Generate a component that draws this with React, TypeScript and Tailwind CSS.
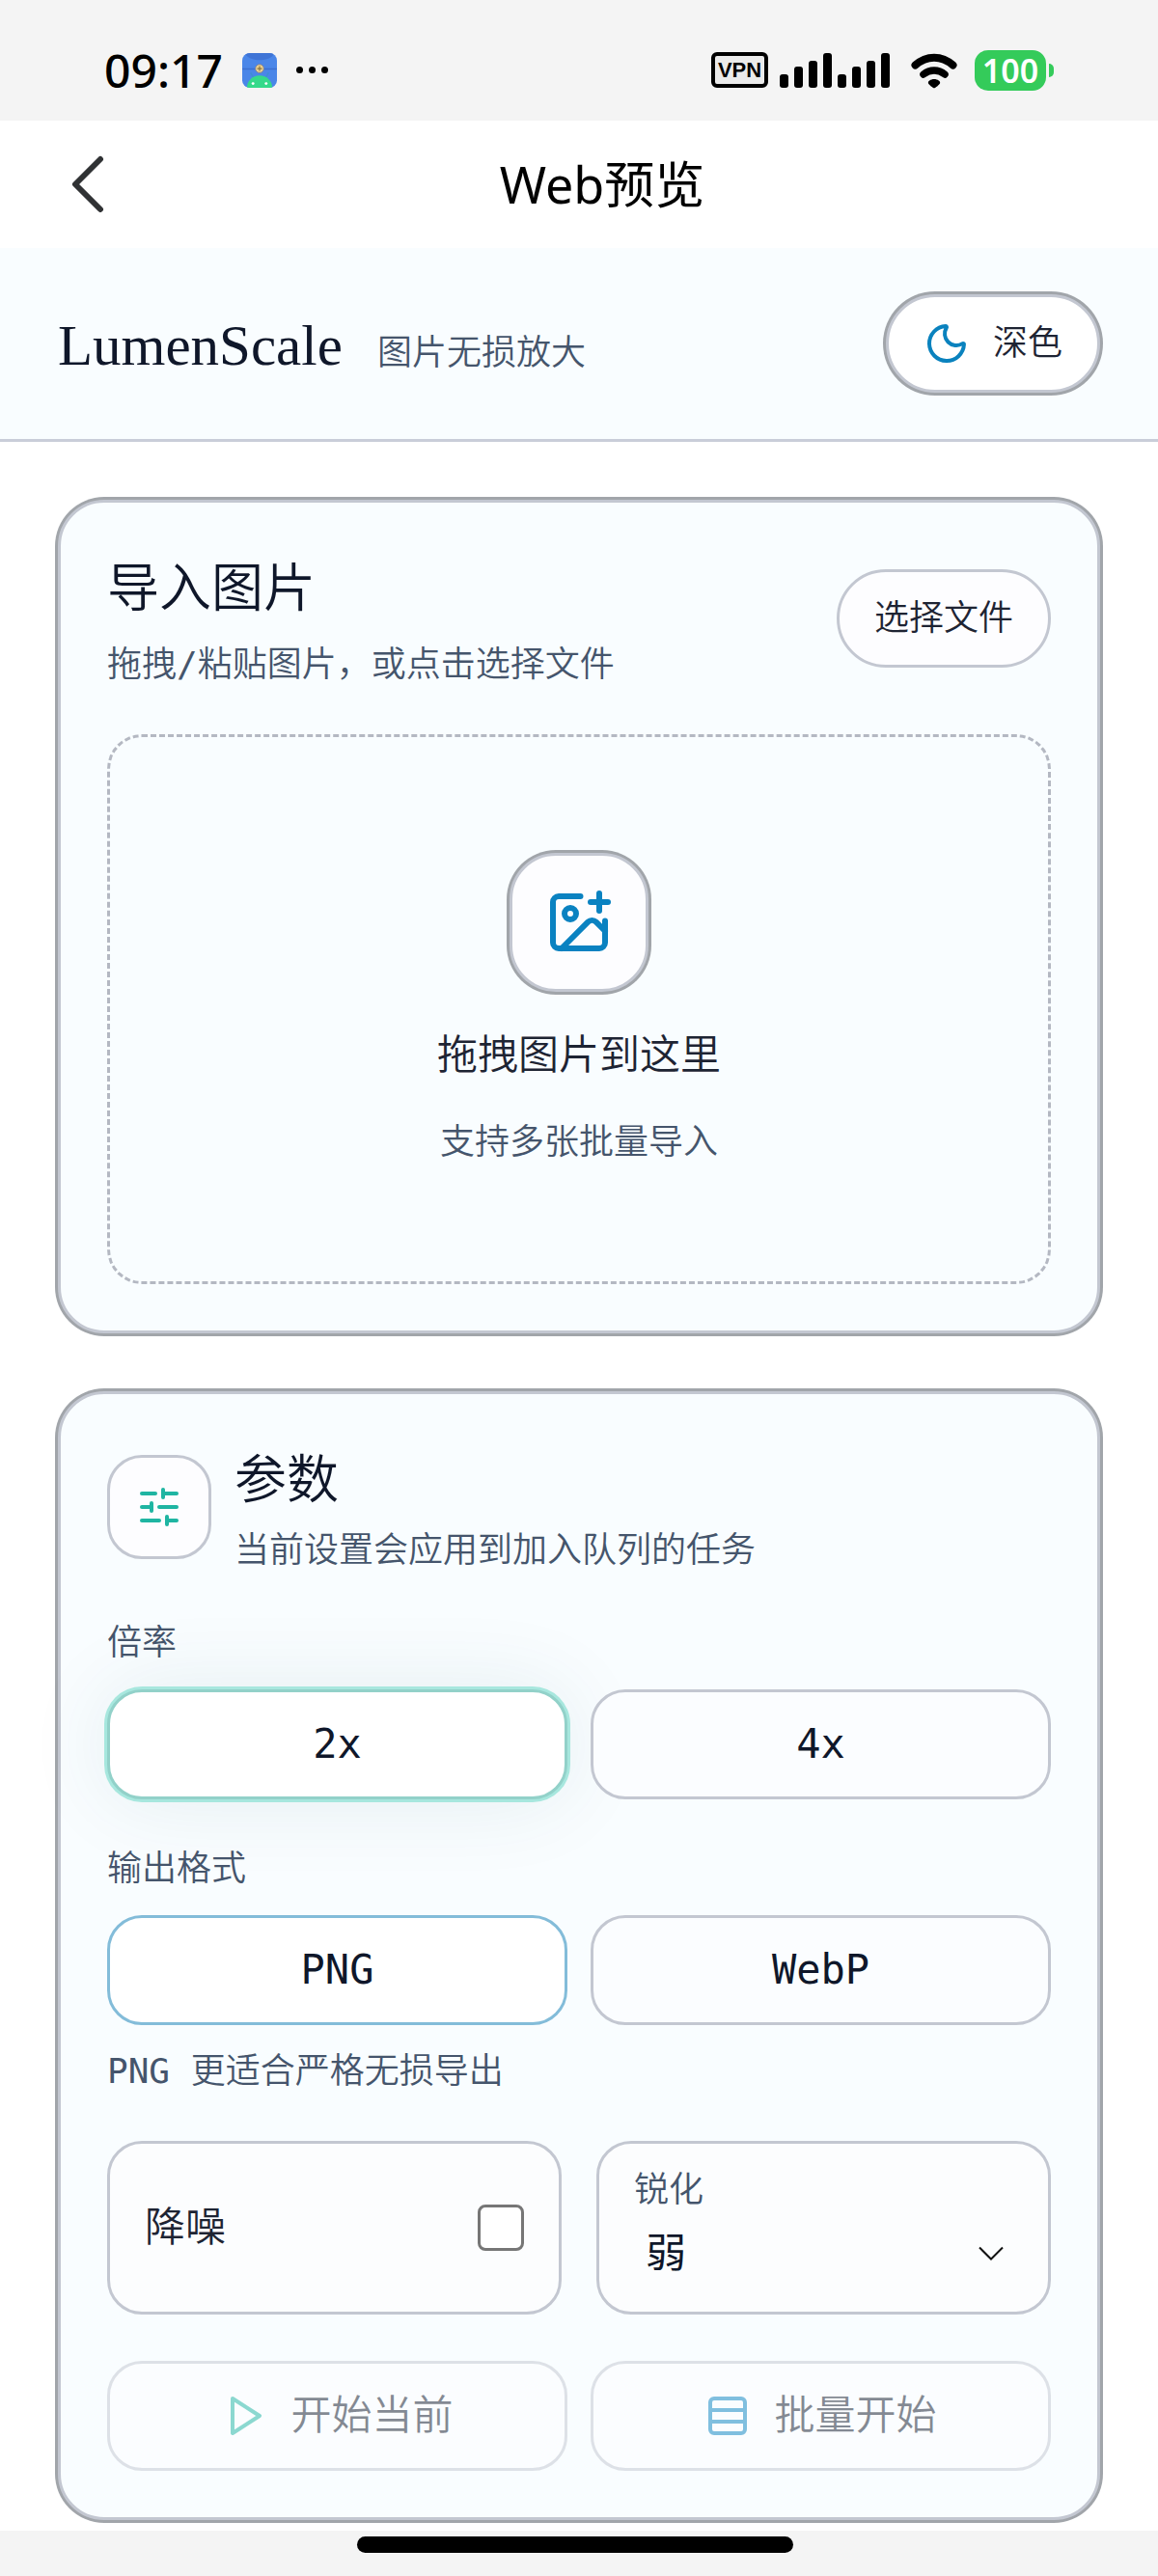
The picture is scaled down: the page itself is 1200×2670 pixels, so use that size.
import { useState, type ReactNode } from "react";
import { ImagePlus, Moon, Rows3, SlidersHorizontal } from "lucide-react";
import { clsx } from "clsx";

const signalBars = ["h-3.5", "h-5.5", "h-7", "h-9"];

const AppBadge = () => (
  <svg viewBox="0 0 37 37" className="size-9" aria-hidden="true">
    <defs>
      <clipPath id="badge">
        <rect width="37" height="37" rx="8" />
      </clipPath>
    </defs>
    <g clipPath="url(#badge)">
      <rect width="37" height="37" fill="#4a86e8" />
      <path d="M3 0h31c-3 10-28 10-31 0z" fill="#3f74d6" />
      <path d="M0 17h37" stroke="#3c6fd0" strokeWidth="1.5" />
      <path d="M9 21l4 7M28 21l-4 7" stroke="#3f8fd0" strokeWidth="1.5" />
      <path d="M5 37a13.500 13 0 0 1 27 0z" fill="#35d98a" />
      <circle cx="11.500" cy="32.500" r="1.500" fill="#fff" />
      <circle cx="25.500" cy="32.500" r="1.500" fill="#fff" />
      <circle cx="18.500" cy="16.500" r="4.500" fill="#e9cf8d" stroke="#7a7f9a" strokeWidth="1" />
      <path d="M18.500 14v5M16 16.500h5" stroke="#8a7440" strokeWidth="1.200" />
    </g>
  </svg>
);

const WifiIcon = () => (
  <svg viewBox="0 0 48 38" className="h-[38px] w-12" aria-hidden="true">
    <g fill="none" stroke="#000" strokeWidth="8" strokeLinecap="round">
      <path d="M4.500 13.500C16 3 32 3 43.500 13.500" />
      <path d="M13 23c6.500-5.500 15.500-5.500 22 0" strokeWidth="7.500" />
    </g>
    <path d="M24 28c3.500 0 7 2.200 6 4.500-.6 1.300-4.800 4.800-6 4.800s-5.400-3.500-6-4.800c-1-2.300 2.500-4.500 6-4.500z" />
  </svg>
);

const Signal = () => (
  <div className="flex items-end gap-1.5">
    {signalBars.map((height) => (
      <span key={height} className={clsx("w-[9px] rounded-[3px] bg-black", height)} />
    ))}
  </div>
);

const StatusBar = () => (
  <div className="flex h-[125px] items-center justify-between bg-[#f4f4f4] px-[108px] pt-5 font-['Noto_Sans',sans-serif] text-black">
    <div className="flex items-center">
      <span className="text-[48px] leading-[50px] font-medium">09:17</span>
      <span className="ml-5 flex items-center gap-5">
        <AppBadge />
        <span className="flex gap-1.5">
          <i className="size-[7px] rounded-full bg-black" />
          <i className="size-[7px] rounded-full bg-black" />
          <i className="size-[7px] rounded-full bg-black" />
        </span>
      </span>
    </div>
    <div className="flex items-center">
      <span className="flex h-[37px] w-[59px] items-center justify-center rounded-md border-4 border-black bg-[#ebebeb] font-['Liberation_Sans',sans-serif] text-[22px] leading-6 font-bold">
        VPN
      </span>
      <span className="ml-3 flex gap-1.5">
        <Signal />
        <Signal />
      </span>
      <span className="ml-[22px]">
        <WifiIcon />
      </span>
      <span className="ml-[18px] flex h-[42px] w-[74px] items-center justify-center rounded-[14px] bg-[#34cb5a] text-[34px] leading-10 font-semibold text-white">
        100
      </span>
      <span className="ml-[3px] h-3.5 w-[5px] rounded-r-full bg-[#34cb5a]" />
    </div>
  </div>
);

const TitleBar = () => (
  <div className="flex h-[132px] items-center bg-white pr-[60px] pl-[72px]">
    <button type="button" aria-label="返回" className="w-9">
      <svg viewBox="0 0 36 60" className="h-[60px] w-9" fill="none" stroke="#303234" strokeWidth="6" strokeLinecap="round" strokeLinejoin="round">
        <path d="M32 4L6 30l26 26" />
      </svg>
    </button>
    <h1 className="flex-1 text-center font-['Noto_Sans','Noto_Sans_CJK_SC',sans-serif] text-[52px] leading-[60px] text-black">
      Web预览
    </h1>
  </div>
);

const Header = () => (
  <header className="flex items-center justify-between border-b-3 border-[#c9cdd9] bg-[#f9fdff] px-[60px] py-12">
    <div className="flex items-baseline gap-9 pt-1">
      <span className="font-['Liberation_Serif',serif] text-[59px] leading-[72px] text-[#0f172a]">LumenScale</span>
      <span className="text-[36px] leading-[48px] font-[350] text-slate-600">图片无损放大</span>
    </div>
    <button
      type="button"
      className="flex h-[102px] items-center gap-6 rounded-full border-3 border-[#c3c7d1] bg-white px-9 text-[36px] leading-[48px] font-[350] text-[#1e2433] shadow-[0_0_0_3px_#a1a5aa]"
    >
      <Moon className="size-12 text-[#0a82be]" />
      深色
    </button>
  </header>
);

const Card = ({ children }: { children: ReactNode }) => (
  <section className="rounded-[48px] border-3 border-[#c3c7d1] bg-[#f9fdff] p-12 shadow-[0_0_0_3px_#a1a5aa]">
    {children}
  </section>
);

const ImportCard = () => (
  <Card>
    <div className="flex items-center justify-between">
      <div>
        <h2 className="text-[54px] leading-[84px] font-[350] text-[#0f172a]">导入图片</h2>
        <p className="mt-3 text-[36px] leading-[48px] font-[350] text-slate-600">拖拽/粘贴图片，或点击选择文件</p>
      </div>
      <button
        type="button"
        className="h-[102px] rounded-full border-3 border-[#c3c7d1] bg-[#fdfdff] px-9 text-[36px] leading-[48px] font-[350] text-[#1e2433]"
      >
        选择文件
      </button>
    </div>
    <div className="mt-12 flex flex-col items-center rounded-[36px] border-3 border-dashed border-[#b4b8c2] py-[120px]">
      <div className="flex size-36 items-center justify-center rounded-[48px] border-3 border-[#c3c7d1] bg-[#fdfdff] shadow-[0_0_0_3px_#a1a5aa]">
        <ImagePlus className="size-[72px] text-[#0a82c1]" />
      </div>
      <p className="mt-9 text-[42px] leading-[60px] font-[350] text-[#1e2433]">拖拽图片到这里</p>
      <p className="mt-9 text-[36px] leading-[48px] font-[350] text-slate-600">支持多张批量导入</p>
    </div>
  </Card>
);

type OptionProps = {
  label: string;
  selected: boolean;
  activeClass: string;
  onSelect: () => void;
};

const Option = ({ label, selected, activeClass, onSelect }: OptionProps) => (
  <button
    type="button"
    aria-pressed={selected}
    onClick={onSelect}
    className={clsx(
      "h-[114px] rounded-[36px] border-3 text-[42px] leading-[60px] text-[#0f172a]",
      selected ? activeClass : "border-[#c3c7d1] bg-[#fbfdff]"
    )}
  >
    {label}
  </button>
);

const SettingsCard = () => {
  const [scale, setScale] = useState("2x");
  const [format, setFormat] = useState("PNG");
  const [denoise, setDenoise] = useState(false);
  const [sharpen, setSharpen] = useState("弱");

  return (
    <Card>
      <div className="flex items-center gap-6">
        <div className="flex size-[108px] items-center justify-center rounded-[36px] border-3 border-[#c3c7d1] bg-[#fdfdff]">
          <SlidersHorizontal className="size-12 text-[#1fb5a2]" />
        </div>
        <div>
          <h2 className="text-[54px] leading-[84px] font-[350] text-[#0f172a]">参数</h2>
          <p className="mt-1.5 text-[36px] leading-[48px] font-[350] text-slate-600">当前设置会应用到加入队列的任务</p>
        </div>
      </div>

      <h3 className="mt-12 text-[36px] leading-[48px] font-[350] text-slate-600">倍率</h3>
      <div className="mt-6 grid grid-cols-2 gap-6">
        {["2x", "4x"].map((item) => (
          <Option
            key={item}
            label={item}
            selected={scale === item}
            activeClass="border-[#92d1c9] bg-white shadow-[0_0_0_3px_#a7e7de,0_0_90px_rgba(15,80,90,0.09)]"
            onSelect={() => setScale(item)}
          />
        ))}
      </div>

      <h3 className="mt-12 text-[36px] leading-[48px] font-[350] text-slate-600">输出格式</h3>
      <div className="mt-6 grid grid-cols-2 gap-6">
        {["PNG", "WebP"].map((item) => (
          <Option
            key={item}
            label={item}
            selected={format === item}
            activeClass="border-[#83bcd9] bg-white"
            onSelect={() => setFormat(item)}
          />
        ))}
      </div>
      <p className="mt-6 text-[36px] leading-[48px] font-[350] text-slate-600">PNG 更适合严格无损导出</p>

      <div className="mt-12 grid grid-cols-2 gap-9">
        <label className="flex items-center justify-between rounded-[36px] border-3 border-[#c3c7d1] bg-[#fcfdfe] px-9 text-[42px] leading-[60px] font-[350] text-[#1e2433]">
          降噪
          <input
            type="checkbox"
            checked={denoise}
            onChange={(e) => setDenoise(e.target.checked)}
            className="size-12 appearance-none rounded-lg border-3 border-[#767676] bg-white checked:bg-[#0a82c1]"
          />
        </label>
        <div className="flex flex-col rounded-[36px] border-3 border-[#c3c7d1] bg-[#fcfdfe] px-9 py-6">
          <label htmlFor="sharpen" className="text-[36px] leading-[48px] font-[350] text-slate-600">
            锐化
          </label>
          <div className="relative mt-1.5">
            <select
              id="sharpen"
              value={sharpen}
              onChange={(e) => setSharpen(e.target.value)}
              className="h-[72px] w-full appearance-none bg-transparent pl-3 text-[42px] leading-[60px] text-[#0f172a]"
            >
              <option>关</option>
              <option>弱</option>
              <option>强</option>
            </select>
            <svg viewBox="0 0 26 16" className="pointer-events-none absolute top-7 right-2.5 h-4 w-[26px]" fill="none" stroke="#111" strokeWidth="2">
              <path d="M1 1.500l12 12 12-12" />
            </svg>
          </div>
        </div>
      </div>

      <div className="mt-12 grid grid-cols-2 gap-6">
        <button
          type="button"
          disabled
          className="flex h-[114px] items-center justify-center gap-6 rounded-[36px] border-3 border-[#c3c7d1] bg-[#fdfdff] text-[42px] leading-[60px] font-[350] text-[#0f172a] opacity-50"
        >
          <svg viewBox="0 0 24 24" className="size-12 text-[#1fb5a2]" fill="none" stroke="currentColor" strokeWidth="2" strokeLinecap="round" strokeLinejoin="round">
            <polygon points="6 3 20 12 6 21 6 3" />
          </svg>
          开始当前
        </button>
        <button
          type="button"
          disabled
          className="flex h-[114px] items-center justify-center gap-6 rounded-[36px] border-3 border-[#c3c7d1] bg-[#fdfdff] text-[42px] leading-[60px] font-[350] text-[#0f172a] opacity-50"
        >
          <Rows3 className="size-12 text-[#0a82c1]" />
          批量开始
        </button>
      </div>
    </Card>
  );
};

export default function App() {
  return (
    <div className="min-h-screen bg-white">
      <StatusBar />
      <TitleBar />
      <div className="font-['DejaVu_Sans_Mono','Noto_Sans_CJK_SC',monospace]">
        <Header />
        <main className="flex flex-col gap-[60px] px-[60px] pt-[60px] pb-[11px]">
          <ImportCard />
          <SettingsCard />
        </main>
      </div>
      <footer className="h-12 bg-[#f4f4f4] pt-1.5 pr-2">
        <div className="mx-auto h-[17px] w-[38%] rounded-full bg-black" />
      </footer>
    </div>
  );
}
